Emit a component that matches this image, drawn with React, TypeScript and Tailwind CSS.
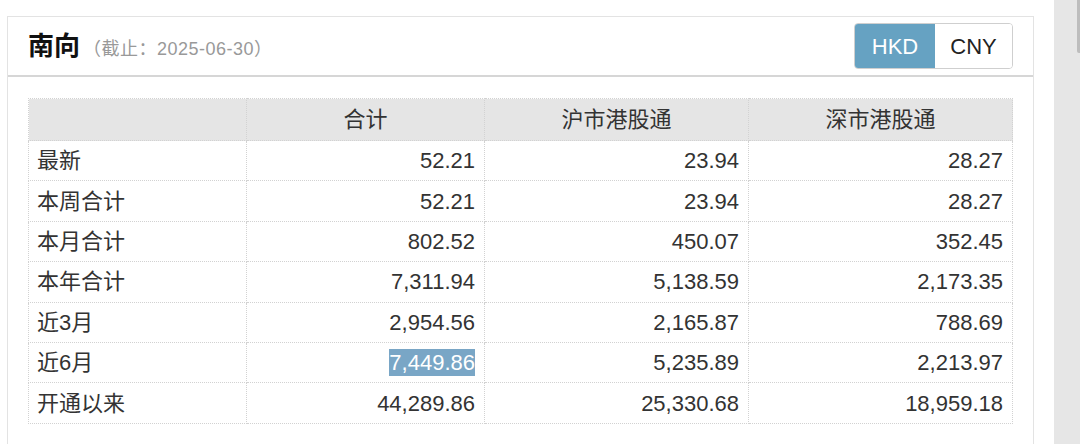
import React from 'react';

interface Row {
  label: string;
  total: string;
  sh: string;
  sz: string;
}

const rows: Row[] = [
  { label: '最新', total: '52.21', sh: '23.94', sz: '28.27' },
  { label: '本周合计', total: '52.21', sh: '23.94', sz: '28.27' },
  { label: '本月合计', total: '802.52', sh: '450.07', sz: '352.45' },
  { label: '本年合计', total: '7,311.94', sh: '5,138.59', sz: '2,173.35' },
  { label: '近3月', total: '2,954.56', sh: '2,165.87', sz: '788.69' },
  { label: '近6月', total: '7,449.86', sh: '5,235.89', sz: '2,213.97' },
  { label: '开通以来', total: '44,289.86', sh: '25,330.68', sz: '18,959.18' },
];

const font = { fontFamily: '"Liberation Sans", "Noto Sans CJK SC", sans-serif' };

export default function App() {
  return (
    <div className="flex h-[444px] w-[1080px] overflow-hidden bg-white text-[#333]" style={font}>
      {/* Panel */}
      <div className="ml-[7px] mt-[16px] w-[1027px] shrink-0 border-l border-r border-t border-[#e3e3e3]">
        {/* Header */}
        <div className="flex h-[60px] items-center justify-between border-b-2 border-[#d6d6d6] pl-[20px] pr-[20px]">
          <div className="flex items-baseline">
            <span className="text-[26px] font-bold text-[#111]">南向</span>
            <span className="ml-[3px] text-[18px] tracking-[0.5px] text-[#999]">（截止：2025-06-30）</span>
          </div>
          <div className="flex h-[46px] overflow-hidden rounded-[4px] border border-[#cfcfcf] text-[22px]">
            <button className="w-[80px] bg-[#66a2c2] text-white">HKD</button>
            <button className="w-[77px] bg-white text-[#222]">CNY</button>
          </div>
        </div>

        {/* Table */}
        <div className="pl-[20px] pt-[21px]">
          <table className="w-[984px] table-fixed border-collapse border border-dotted border-[#c8c8c8] text-[22px]">
            <colgroup>
              <col className="w-[218px]" />
              <col className="w-[238px]" />
              <col className="w-[264px]" />
              <col className="w-[264px]" />
            </colgroup>
            <thead>
              <tr className="h-[42px] bg-[#e5e5e5]">
                <th className="border border-dotted border-[#d2d2d2]" />
                <th className="border border-dotted border-[#d2d2d2] text-center font-normal">合计</th>
                <th className="border border-dotted border-[#d2d2d2] text-center font-normal">沪市港股通</th>
                <th className="border border-dotted border-[#d2d2d2] text-center font-normal">深市港股通</th>
              </tr>
            </thead>
            <tbody>
              {rows.map((r) => (
                <tr key={r.label} className="h-[40.4px]">
                  <td className="border border-dotted border-[#d2d2d2] pl-[8px] text-left">{r.label}</td>
                  <td className="border border-dotted border-[#d2d2d2] pr-[9px] text-right">
                    {r.label === '近6月' ? (
                      <span className="bg-[#79a6c6] py-[1px] text-white">{r.total}</span>
                    ) : (
                      r.total
                    )}
                  </td>
                  <td className="border border-dotted border-[#d2d2d2] pr-[9px] text-right">{r.sh}</td>
                  <td className="border border-dotted border-[#d2d2d2] pr-[9px] text-right">{r.sz}</td>
                </tr>
              ))}
            </tbody>
          </table>
        </div>
      </div>

      {/* Scrollbar track */}
      <div className="relative ml-[20px] h-full flex-1 bg-[#e6e6e6]">
        <div className="absolute right-0 top-0 h-[53px] w-[3px] rounded-bl-[2px] bg-[#bdbdbd]" />
      </div>
    </div>
  );
}
